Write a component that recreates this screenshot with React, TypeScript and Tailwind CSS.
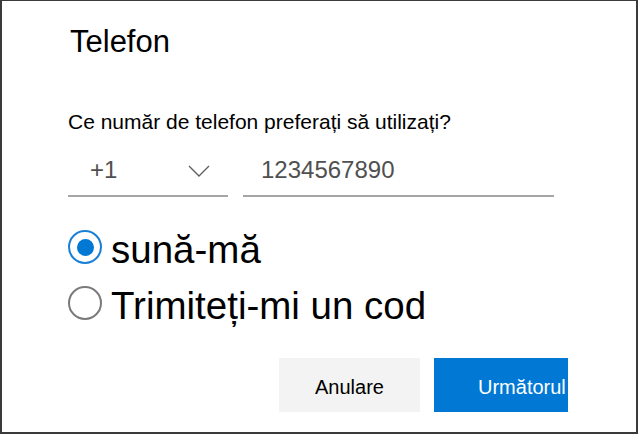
import { useState } from "react";

const font = { fontFamily: '"Liberation Sans", Arial, sans-serif' };

function Radio({ checked }: { checked: boolean }) {
  return (
    <span
      className={
        checked
          ? "flex h-[34px] w-[34px] shrink-0 items-center justify-center rounded-full border-2 border-[#1a7fd6]"
          : "flex h-[34px] w-[34px] shrink-0 items-center justify-center rounded-full border-2 border-[#7a7a7a]"
      }
    >
      {checked && <span className="h-[17px] w-[17px] rounded-full bg-[#0078d4]" />}
    </span>
  );
}

function Chevron() {
  return (
    <svg width="22" height="12" viewBox="0 0 22 12" fill="none">
      <path d="M1 1l10 10L21 1" stroke="#606060" strokeWidth="1.4" />
    </svg>
  );
}

export default function App() {
  const [method, setMethod] = useState("call");
  const options = [
    { id: "call", label: "sună-mă" },
    { id: "code", label: "Trimiteți-mi un cod" },
  ];

  return (
    <div
      className="flex h-[434px] w-[638px] flex-col border-t border-r-2 border-b-2 border-l-2 border-[#3a3a3a] bg-white pl-[66px] pr-[68px] text-black"
      style={font}
    >
      <h1 className="pt-[23px] pl-[2px] text-[31px] leading-[36px]">Telefon</h1>

      <p className="mt-[50px] text-[21px] leading-[24px]">
        Ce număr de telefon preferați să utilizați?
      </p>

      <div className="mt-[19px] flex gap-[15px]">
        <div className="flex h-[44px] w-[160px] items-start justify-between border-b-2 border-[#a6a6a6] pt-[3px] pl-[22px] pr-[18px]">
          <span className="text-[24px] leading-[28px] text-[#505050]">+1</span>
          <span className="mt-[9px]">
            <Chevron />
          </span>
        </div>
        <div className="flex h-[44px] w-[311px] items-start border-b-2 border-[#a6a6a6] pt-[3px] pl-[18px]">
          <span className="text-[24px] leading-[28px] text-[#505050]">1234567890</span>
        </div>
      </div>

      <div className="mt-[22px] flex flex-col">
        {options.map((o) => (
          <div
            key={o.id}
            className="flex h-[56px] cursor-pointer items-start gap-[9px]"
            onClick={() => setMethod(o.id)}
          >
            <span className="mt-[11px]">
              <Radio checked={method === o.id} />
            </span>
            <span className="mt-[3px] text-[38.5px] leading-[56px]">{o.label}</span>
          </div>
        ))}
      </div>

      <div className="mt-[27px] flex justify-end gap-[14px]">
        <button className="flex h-[54px] w-[141px] items-center justify-center bg-[#f3f3f3] pt-[4px] text-[20px] text-black">
          Anulare
        </button>
        <button className="flex h-[54px] w-[134px] items-center overflow-hidden whitespace-nowrap bg-[#0078d4] pt-[4px] pl-[44px] text-[20px] text-white">
          Următorul
        </button>
      </div>
    </div>
  );
}
